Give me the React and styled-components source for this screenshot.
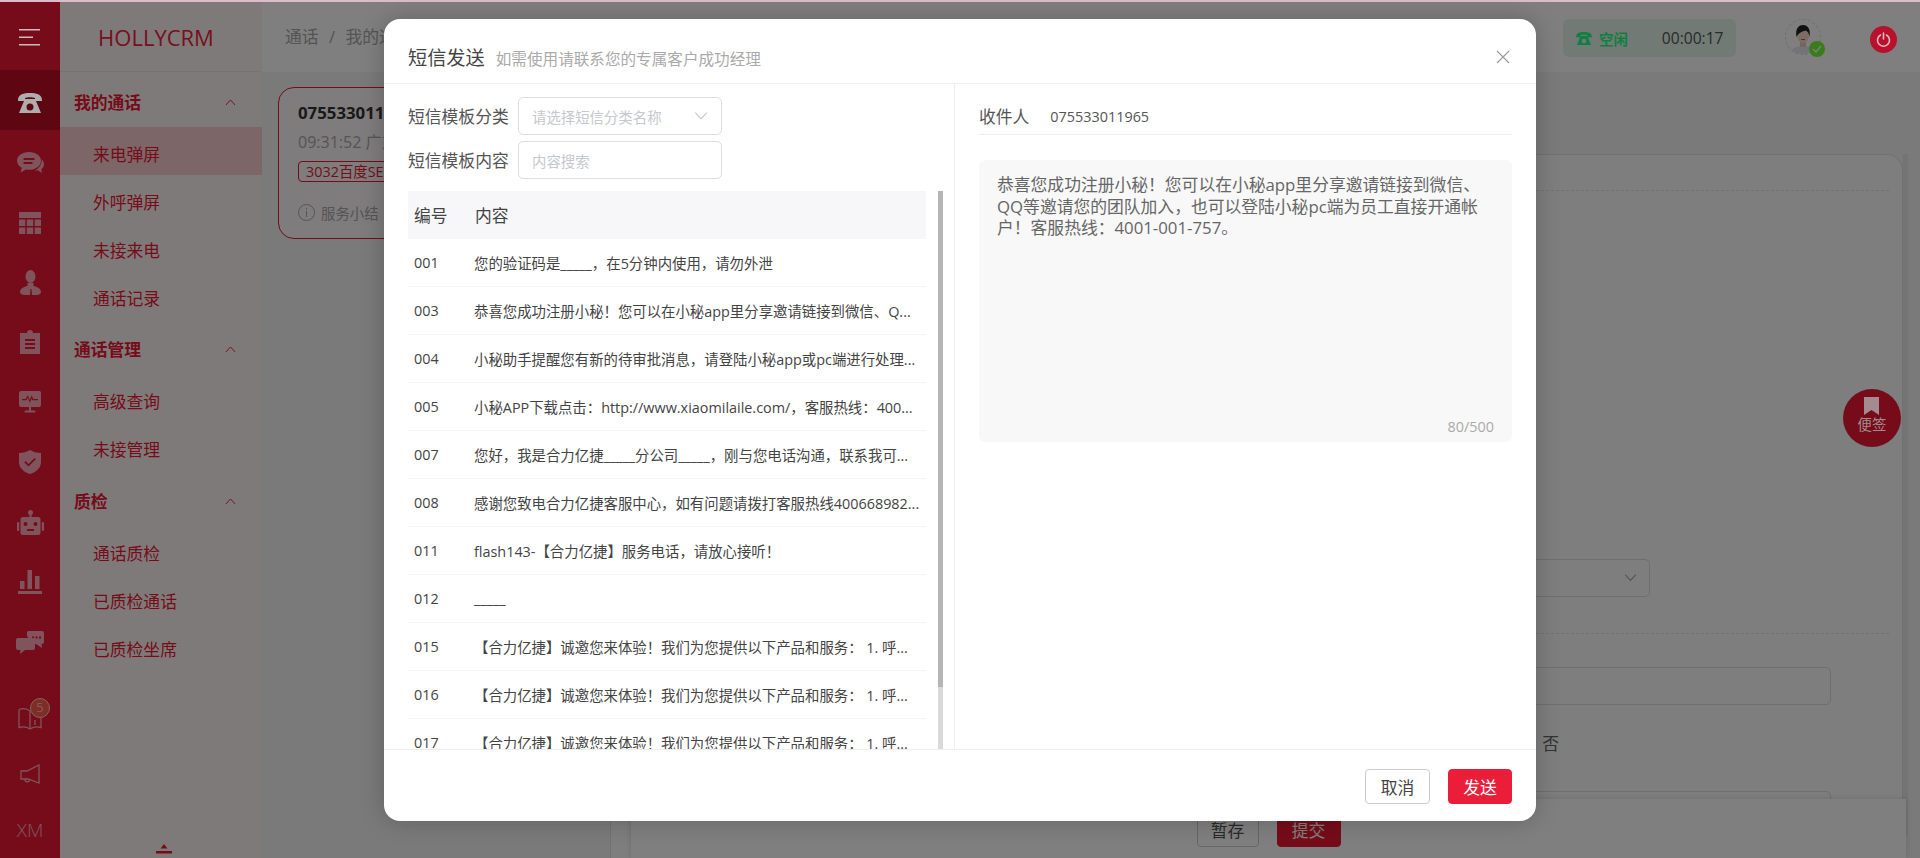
import styled, { createGlobalStyle } from "styled-components";

const GlobalStyle = createGlobalStyle`
	html, body {
		margin: 0;
		height: 100%;
		overflow: hidden;
		background: #dcbccc;
		font-family: "Open Sans", "Noto Sans CJK SC", sans-serif;
		color: #333;
	}
	* {
		box-sizing: border-box;
	}
`

const Page = styled.div`
	position: relative;
	display: flex;
	width: 1920px;
	height: 858px;
	padding-top: 2px;
	overflow: hidden;
`

const Sidebar = styled.nav`
	display: flex;
	flex-direction: column;
	flex: none;
	width: 60px;
	background: #ec1834;
	color: #ffa8b8;
`

const Burger = styled.div`
	position: relative;
	z-index: 11;
	display: flex;
	align-items: center;
	justify-content: center;
	height: 68px;
	color: #c8bcbe;
	padding-top: 4px;
`

const SideItem = styled.div`
	display: flex;
	align-items: center;
	justify-content: center;
	height: 60px;
	padding-top: 6px;
	background: ${p => p.$active ? "#bc0c24" : "transparent"};
`

const SideIcon = styled.span`
	display: flex;
	position: ${p => p.$active ? "relative" : "static"};
	z-index: ${p => p.$active ? 11 : "auto"};
	color: ${p => p.$active ? "#aeaeae" : "inherit"};
`

const SideBottom = styled.div`
	display: flex;
	flex-direction: column;
	margin-top: 21px;
`

const BottomItem = styled.div`
	position: relative;
	display: flex;
	align-items: center;
	justify-content: center;
	height: 56px;
	font-size: 19px;
	font-weight: 300;
`

const Badge = styled.span`
	position: absolute;
	top: 8px;
	left: 30px;
	width: 20px;
	height: 20px;
	border-radius: 50%;
	border: 1px solid #ffd0c0;
	background: #fc5c4c;
	color: #ffe6e0;
	font-size: 13px;
	line-height: 17px;
	text-align: center;
`

const MenuPanel = styled.aside`
	position: relative;
	flex: none;
	width: 202px;
	background: #fff5f5;
`

const Logo = styled.div`
	display: flex;
	align-items: center;
	justify-content: center;
	height: 70px;
	padding-right: 10px;
	border-bottom: 1px solid #f0e4e4;
	color: #f0203c;
	font-size: 22px;
`

const GroupTitle = styled.div`
	display: flex;
	align-items: center;
	justify-content: space-between;
	height: 55px;
	margin-top: ${p => p.$gap}px;
	padding: 5px 26px 0 14px;
	color: #ec1834;
	font-size: 16.8px;
	font-weight: 700;
`

const MenuLink = styled.div`
	display: flex;
	align-items: center;
	height: 48px;
	padding: 5px 0 0 33px;
	background: ${p => p.$active ? "#f8ccd0" : "transparent"};
	color: #ec1834;
	font-size: 16.8px;
`

const Collapse = styled.div`
	position: absolute;
	left: 96px;
	bottom: 11px;
	width: 16px;
	height: 10px;
	color: #ec1834;
`

const Main = styled.main`
	position: relative;
	display: flex;
	flex-direction: column;
	flex: 1;
	min-width: 0;
`

const Header = styled.header`
	display: flex;
	align-items: center;
	flex: none;
	height: 70px;
	padding-left: 23px;
	background: #fff;
`

const Breadcrumb = styled.div`
	flex: 1;
	padding-bottom: 3px;
	color: #a8a8a8;
	font-size: 16.8px;
	word-spacing: 6px;
`

const StatusPill = styled.div`
	display: flex;
	align-items: center;
	width: 173px;
	height: 38px;
	padding-left: 13px;
	margin-top: 2px;
	border-radius: 6px;
	background: #e2f4e8;
	color: #1eff84;
`

const StatusIcon = styled.span`
	display: flex;
`

const StatusText = styled.span`
	margin-left: 7px;
	font-size: 14.4px;
	font-weight: 700;
`

const Timer = styled.span`
	margin-left: 34px;
	color: #555;
	font-size: 15.6px;
`

const Avatar = styled.div`
	position: relative;
	width: 36px;
	height: 36px;
	margin-left: 49px;
	border-radius: 50%;
	border: 1px dashed #ddd;
`

const AvatarCheck = styled.span`
	position: absolute;
	right: -5px;
	bottom: -3px;
	display: flex;
	align-items: center;
	justify-content: center;
	width: 16px;
	height: 16px;
	border-radius: 50%;
	background: #74f838;
	color: #fff;
`

const PowerButton = styled.div`
	position: relative;
	z-index: 11;
	display: flex;
	align-items: center;
	justify-content: center;
	width: 27px;
	height: 27px;
	margin: 4px 23px 0 49px;
	border-radius: 50%;
	background: #b8112b;
	color: #e6b8c0;
`

const Content = styled.div`
	display: flex;
	flex: 1;
	min-height: 0;
	padding: 15px 12px 0 16px;
	background: #f4f4f4;
`

const CallCard = styled.section`
	flex: none;
	width: 320px;
	height: 152px;
	padding: 14px 19px;
	border: 1px solid #ec1834;
	border-radius: 16px;
	background: #fdf8f8;
`

const CallNumber = styled.div`
	font-size: 16.8px;
	font-weight: 700;
	line-height: 22px;
`

const CallTime = styled.div`
	margin-top: 7px;
	color: #aaa;
	font-size: 16px;
	line-height: 22px;
`

const CallTag = styled.span`
	display: inline-block;
	margin-top: 8px;
	padding: 0 7px;
	border: 1px solid #ec1834;
	border-radius: 4px;
	color: #ec1834;
	font-size: 14.4px;
	line-height: 19px;
`

const CallService = styled.div`
	display: flex;
	align-items: center;
	gap: 6px;
	margin-top: 20px;
	color: #aaa;
	font-size: 14.4px;
`

const FormPanel = styled.section`
	display: flex;
	flex-direction: column;
	flex: 1;
	margin: 67px 0 0 12px;
	border: 1px solid #e2e2e2;
	border-bottom: 0;
	border-radius: 16px 16px 0 0;
	background: #fcfcfc;
`

const DashRule = styled.div`
	flex: none;
	margin: ${p => p.$top}px 13px 0 0;
	border-top: 1px dashed #e4e4e4;
`

const FormField = styled.div`
	flex: none;
	align-self: flex-end;
	display: flex;
	align-items: center;
	justify-content: flex-end;
	width: 400px;
	height: 38px;
	margin: ${p => p.$top}px ${p => p.$right}px 0 0;
	padding-right: 12px;
	border: 1px solid #ddd;
	border-radius: 5px;
	color: #bbb;
`

const RadioLabel = styled.div`
	flex: none;
	align-self: flex-end;
	margin: 27px 343px 0 0;
	color: #666;
	font-size: 16.8px;
	line-height: 24px;
`

const PanelScroll = styled.div`
	flex: none;
	width: 5px;
	height: 682px;
	margin-top: 67px;
	background: #e8e8e8;
`

const BottomBar = styled.div`
	position: absolute;
	left: 369px;
	right: 14px;
	bottom: 0;
	display: flex;
	align-items: center;
	justify-content: center;
	gap: 18px;
	height: 59px;
	padding-top: 2px;
	background: #fff;
	box-shadow: 0 0 6px rgba(0, 0, 0, 0.15);
`

const BarButton = styled.div`
	display: flex;
	align-items: center;
	justify-content: center;
	width: ${p => p.$primary ? 64 : 62}px;
	height: 34px;
	border: 1px solid ${p => p.$primary ? "#ec1834" : "#ccc"};
	border-radius: 4px;
	background: ${p => p.$primary ? "#ec1834" : "transparent"};
	color: ${p => p.$primary ? "#fff" : "#555"};
	font-size: 16.8px;
`

const Fab = styled.div`
	position: absolute;
	left: 1843px;
	top: 389px;
	display: flex;
	flex-direction: column;
	align-items: center;
	width: 58px;
	height: 58px;
	padding-top: 8px;
	border-radius: 50%;
	background: #ec1834;
	font-size: 14.4px;
	line-height: 20px;
`

const FabContent = styled.span`
	position: relative;
	z-index: 11;
	display: flex;
	flex-direction: column;
	align-items: center;
	color: #a58a90;
`

const Overlay = styled.div`
	position: absolute;
	inset: 2px 0 0 0;
	z-index: 10;
	display: flex;
	justify-content: center;
	align-items: flex-start;
	padding-top: 17px;
	background: rgba(0, 0, 0, 0.5);
`

const Modal = styled.div`
	display: flex;
	flex-direction: column;
	width: 1152px;
	height: 802px;
	border-radius: 16px;
	background: #fff;
	box-shadow: 0 0 24px rgba(0, 0, 0, 0.22);
	overflow: hidden;
`

const ModalHeader = styled.div`
	display: flex;
	align-items: center;
	flex: none;
	height: 65px;
	padding: 22px 26px 10px 24px;
	border-bottom: 1px solid #eee;
`

const ModalTitle = styled.h2`
	margin: 0;
	color: #444;
	font-size: 19.2px;
	font-weight: 400;
`

const ModalHint = styled.span`
	flex: 1;
	margin-left: 11px;
	color: #aaa;
	font-size: 15.6px;
	padding-top: 2px;
`

const ModalBody = styled.div`
	display: flex;
	flex: 1;
	min-height: 0;
`

const LeftColumn = styled.div`
	display: flex;
	flex-direction: column;
	flex: none;
	width: 571px;
	padding: 13px 11px 0 24px;
	border-right: 1px solid #eee;
	overflow: hidden;
`

const FilterRow = styled.div`
	display: flex;
	align-items: center;
	flex: none;
	height: 38px;
	margin-bottom: ${p => p.$gap}px;
	color: #555;
	font-size: 16.8px;
`

const FilterLabel = styled.label`
	flex: none;
	width: 110px;
`

const FilterBox = styled.div`
	display: flex;
	align-items: center;
	justify-content: space-between;
	width: 204px;
	height: 38px;
	padding: 0 13px;
	border: 1px solid #ddd;
	border-radius: 5px;
	color: #c5c8ce;
	font-size: 14.4px;
`

const TableWrap = styled.div`
	display: flex;
	flex: 1;
	min-height: 0;
	margin-top: 12px;
`

const TemplateTable = styled.div`
	flex: none;
	width: 518px;
	overflow: hidden;
`

const TableHead = styled.div`
	display: grid;
	grid-template-columns: 61px 1fr;
	align-items: center;
	height: 48px;
	padding-left: 6px;
	background: #f7f7f9;
	color: #444;
	font-size: 16.8px;
`

const TableRow = styled.div`
	display: grid;
	grid-template-columns: 60px 1fr;
	align-items: center;
	height: 48px;
	padding-left: 6px;
	border-bottom: 1px solid #f5f5f5;
	color: #444;
	font-size: 14.4px;
	white-space: nowrap;
`

const ScrollTrack = styled.div`
	flex: none;
	width: 5px;
	margin-left: 12px;
	background: #d9d9d9;
`

const ScrollThumb = styled.div`
	height: 496px;
	background: #b5b5b5;
`

const RightColumn = styled.div`
	flex: 1;
	padding: 0 24px;
`

const Recipient = styled.div`
	display: flex;
	align-items: center;
	height: 51px;
	padding-top: 13px;
	border-bottom: 1px solid #eee;
	color: #555;
	font-size: 16.8px;
`

const RecipientNumber = styled.span`
	margin-left: 21px;
	font-size: 14.4px;
	padding-top: 2px;
`

const MessageBox = styled.div`
	display: flex;
	flex-direction: column;
	justify-content: space-between;
	height: 282px;
	margin-top: 25px;
	padding: 14px 18px 4px;
	border-radius: 6px;
	background: #f8f8f8;
	color: #666;
	font-size: 16.8px;
	line-height: 21.6px;
`

const Counter = styled.div`
	align-self: flex-end;
	color: #aaa;
	font-size: 14.4px;
`

const ModalFooter = styled.div`
	display: flex;
	justify-content: flex-end;
	gap: 18px;
	flex: none;
	height: 72px;
	padding: 19px 24px 0;
	border-top: 1px solid #eee;
`

const ModalButton = styled.button`
	width: ${p => p.$primary ? 64 : 65}px;
	height: 35px;
	padding: 0;
	border: 1px solid ${p => p.$primary ? "#eb1e3a" : "#ccc"};
	border-radius: 4px;
	background: ${p => p.$primary ? "#eb1e3a" : "#fff"};
	color: ${p => p.$primary ? "#fff" : "#444"};
	font-family: inherit;
	font-size: 16.8px;
`

const CloseIcon = () => (
	<svg width="14" height="14" viewBox="0 0 14 14" fill="none" stroke="#999" strokeWidth="1.1">
		<path d="M1 1l12 12M13 1L1 13" />
	</svg>
)

const PhoneIcon = ({ w = 24, h = 20 }) => (
	<svg width={w} height={h} viewBox="0 0 24 20" fill="currentColor">
		<path d="M0 7C0 1 6 0 12 0s12 1 12 7v1h-7V5c-2-1-8-1-10 0v3H0z" />
		<path fillRule="evenodd" d="M7 6h10l1 2 5 12H1L6 8zM12 10.500a3.500 3.500 0 1 0 0 7a3.500 3.500 0 0 0 0-7z" />
	</svg>
)

const ChatIcon = () => (
	<svg width="27" height="21" viewBox="0 0 27 21" fill="currentColor">
		<path fillRule="evenodd" d="M12 0C5.400 0 0 3.800 0 8.700c0 2.900 1.900 5.400 4.800 7L3.600 20.500l5.400-3c1 .2 2 .3 3 .3 6.600 0 12-3.900 12-9.100S18.600 0 12 0zM6.500 6h11v2h-11zM6.500 10h9v2h-9z" />
		<path d="M24.800 7.500c1.400 1.300 2.200 3 2.200 4.800 0 2-1 3.800-2.700 5l.7 3.700-4.200-2.700c-1 .2-2 .2-3 .1 3.700-1.300 6.800-5.500 7-10.900z" />
	</svg>
)

const GridIcon = () => (
	<svg width="22" height="22" viewBox="0 0 22 22" fill="currentColor">
		<rect width="22" height="6" />
		<rect y="7.500" width="6.300" height="6.500" />
		<rect x="7.800" y="7.500" width="6.400" height="6.500" />
		<rect x="15.700" y="7.500" width="6.300" height="6.500" />
		<rect y="15.500" width="6.300" height="6.500" />
		<rect x="7.800" y="15.500" width="6.400" height="6.500" />
		<rect x="15.700" y="15.500" width="6.300" height="6.500" />
	</svg>
)

const PersonIcon = () => (
	<svg width="21" height="25" viewBox="0 0 21 25" fill="currentColor">
		<ellipse cx="10.500" cy="6.500" rx="5" ry="6.500" />
		<path d="M7.500 13h6v3l2 .5c3.500 1 5.500 3 5.500 5.500 0 2-2 3-5 3h-4l-.5-6h-1L10 25H5c-3 0-5-1-5-3 0-2.500 2-4.500 5.500-5.500l2-.5z" />
	</svg>
)

const ClipboardIcon = () => (
	<svg width="20" height="24" viewBox="0 0 20 24" fill="currentColor">
		<path fillRule="evenodd" d="M7 3c0-4 6-4 6 0h7v21H0V3zM5 9v2h10V9zM5 13v2h10v-2zM5 17v2h10v-2z" />
	</svg>
)

const MonitorIcon = () => (
	<svg width="22" height="22" viewBox="0 0 22 22" fill="currentColor">
		<path fillRule="evenodd" d="M2 0h18a2 2 0 0 1 2 2v12a2 2 0 0 1-2 2H2a2 2 0 0 1-2-2V2a2 2 0 0 1 2-2zM3 8v1.300h4.400l1.400-2.600 2 5 1.900-4.200.7 1.800H19V8h-4.700l-1.600-3.600-2 4.500-1.800-4.700L6.700 8z" />
		<rect x="10" y="16" width="2" height="4" />
		<rect x="5.500" y="19.500" width="11" height="2" rx="1" />
	</svg>
)

const ShieldIcon = () => (
	<svg width="22" height="24" viewBox="0 0 22 24" fill="currentColor">
		<path fillRule="evenodd" d="M11 0c3 2 7 3 11 3v9c0 6-5 10-11 12C5 22 0 18 0 12V3c4 0 8-1 11-3zM6.500 11l-1.300 1.300 4.300 4.200 7.300-7.200L15.500 8l-6 6z" />
	</svg>
)

const RobotIcon = () => (
	<svg width="27" height="25" viewBox="0 0 27 25" fill="currentColor">
		<circle cx="13.500" cy="2.500" r="2.500" />
		<rect x="12.500" y="4" width="2" height="4" />
		<path fillRule="evenodd" d="M6 7h15a2.500 2.500 0 0 1 2.500 2.500v13A2.500 2.500 0 0 1 21 25H6a2.500 2.500 0 0 1-2.500-2.500v-13A2.500 2.500 0 0 1 6 7zM8.500 12a2 2 0 1 0 0 4 2 2 0 0 0 0-4zM18.500 12a2 2 0 1 0 0 4 2 2 0 0 0 0-4zM10 19v2h7v-2z" />
		<rect y="12" width="2.200" height="9" rx="1.100" />
		<rect x="24.800" y="12" width="2.200" height="9" rx="1.100" />
	</svg>
)

const ChartIcon = () => (
	<svg width="24" height="24" viewBox="0 0 24 24" fill="currentColor">
		<rect x="2" y="11" width="4.500" height="8" />
		<rect x="9.500" y="0" width="4.500" height="19" />
		<rect x="17" y="6" width="4.500" height="13" />
		<rect y="21" width="24" height="3" />
	</svg>
)

const TalkIcon = () => (
	<svg width="28" height="23" viewBox="0 0 28 23" fill="currentColor">
		<path d="M2 7h15a2 2 0 0 1 2 2v8a2 2 0 0 1-2 2H9l-5 4 .5-4H2a2 2 0 0 1-2-2V9a2 2 0 0 1 2-2z" />
		<path fillRule="evenodd" d="M14 0h12a2 2 0 0 1 2 2v9a2 2 0 0 1-2 2h-.5l.5 4-6-4h-8V7c0-1-.5-1.500-1-1.700V2a2 2 0 0 1 3-2zM16 5.500v2h2v-2zM19.500 5.500v2h2v-2zM23 5.500v2h2v-2z" />
	</svg>
)

const BookIcon = () => (
	<svg width="24" height="24" viewBox="0 0 24 24" fill="none" stroke="currentColor" strokeWidth="1.300">
		<path d="M1 3.500c4-1.500 8-1 11 1.500M1 3.500V21.500c4-1 8-.5 11 1.500 3-2 7-2.500 11-1.500V12M12 5v18M17 14v5" />
	</svg>
)

const MegaphoneIcon = () => (
	<svg width="20" height="20" viewBox="0 0 20 20" fill="none" stroke="currentColor" strokeWidth="1.300">
		<path d="M19 1v18L8 15H1V7h6zM5 15.500c0 3 4 3 4.500.5" />
	</svg>
)

const Chevron = ({ up, size = 11, color = "currentColor" }) => (
	<svg width={size} height={size / 2 + 1} viewBox="0 0 12 7" fill="none" stroke={color} strokeWidth="1">
		<path d={up ? "M1 6.500L6 1l5 5.500" : "M1 .5L6 6l5-5.500"} />
	</svg>
)

const AvatarPhoto = () => (
	<svg width="34" height="34" viewBox="0 0 34 34">
		<clipPath id="avatarClip"><circle cx="17" cy="17" r="17" /></clipPath>
		<g clipPath="url(#avatarClip)">
			<path d="M4 34c1-6 7-8 13-8s12 2 13 8z" fill="#e8e8ee" />
			<rect x="14" y="21" width="6" height="6" fill="#eec8b8" />
			<ellipse cx="17" cy="15" rx="6" ry="8" fill="#f6d8cc" />
			<path d="M10.500 17C9 8 13 5 17 5s8 3 6.500 12c-.5-4-2-6-4-6.500-3 1-7 2-9 6.500z" fill="#222" />
			<path d="M15 19.500h4" stroke="#d84a4a" strokeWidth="1.200" />
		</g>
	</svg>
)

const menu = [
	{ title: "我的通话", gap: 0, items: ["来电弹屏", "外呼弹屏", "未接来电", "通话记录"] },
	{ title: "通话管理", gap: 0, items: ["高级查询", "未接管理"] },
	{ title: "质检", gap: 1, items: ["通话质检", "已质检通话", "已质检坐席"] },
];

const sideIcons = [PhoneIcon, ChatIcon, GridIcon, PersonIcon, ClipboardIcon, MonitorIcon, ShieldIcon, RobotIcon, ChartIcon, TalkIcon];

const invite = "【合力亿捷】诚邀您来体验！我们为您提供以下产品和服务： 1. 呼...";

const templates = [
	["001", "您的验证码是_____，在5分钟内使用，请勿外泄"],
	["003", "恭喜您成功注册小秘！您可以在小秘app里分享邀请链接到微信、Q..."],
	["004", "小秘助手提醒您有新的待审批消息，请登陆小秘app或pc端进行处理..."],
	["005", "小秘APP下载点击：http://www.xiaomilaile.com/，客服热线：400..."],
	["007", "您好，我是合力亿捷_____分公司_____，刚与您电话沟通，联系我可..."],
	["008", "感谢您致电合力亿捷客服中心，如有问题请拨打客服热线400668982..."],
	["011", "flash143-【合力亿捷】服务电话，请放心接听！"],
	["012", "_____"],
	["015", invite],
	["016", invite],
	["017", invite],
];

const App = () => {
	return (
		<Page>
			<GlobalStyle />
			<Sidebar>
				<Burger>
					<svg width="22" height="17" viewBox="0 0 22 17" fill="currentColor">
						<rect width="21" height="1.500" />
						<rect y="7.500" width="14" height="1.500" />
						<rect y="15" width="21" height="1.500" />
					</svg>
				</Burger>
				{sideIcons.map((Icon, i) => (
					<SideItem key={i} $active={i === 0}>
						<SideIcon $active={i === 0}><Icon /></SideIcon>
					</SideItem>
				))}
				<SideBottom>
					<BottomItem><BookIcon /><Badge>5</Badge></BottomItem>
					<BottomItem><MegaphoneIcon /></BottomItem>
					<BottomItem>XM</BottomItem>
				</SideBottom>
			</Sidebar>

			<MenuPanel>
				<Logo>HOLLYCRM</Logo>
				{menu.map(group => (
					<div key={group.title}>
						<GroupTitle $gap={group.gap}>{group.title}<Chevron up /></GroupTitle>
						{group.items.map(item => (
							<MenuLink key={item} $active={item === "来电弹屏"}>{item}</MenuLink>
						))}
					</div>
				))}
				<Collapse>
					<svg width="16" height="10" viewBox="0 0 16 10" fill="currentColor">
						<path d="M8 0l3.500 4.500h-7z" />
						<rect y="7" width="16" height="2.500" />
					</svg>
				</Collapse>
			</MenuPanel>

			<Main>
				<Header>
					<Breadcrumb>通话 / 我的通话 / 来电弹屏</Breadcrumb>
					<StatusPill>
						<StatusIcon><PhoneIcon w={16} h={13} /></StatusIcon>
						<StatusText>空闲</StatusText>
						<Timer>00:00:17</Timer>
					</StatusPill>
					<Avatar>
						<AvatarPhoto />
						<AvatarCheck>
							<svg width="10" height="8" viewBox="0 0 10 8" fill="none" stroke="currentColor" strokeWidth="1.200">
								<path d="M1 4l3 3 5-6" />
							</svg>
						</AvatarCheck>
					</Avatar>
					<PowerButton>
						<svg width="15" height="15" viewBox="0 0 15 15" fill="none" stroke="currentColor" strokeWidth="1.600" strokeLinecap="round">
							<path d="M4.500 3a6 6 0 1 0 6 0M7.500 1v6" />
						</svg>
					</PowerButton>
				</Header>
				<Content>
					<CallCard>
						<CallNumber>075533011965</CallNumber>
						<CallTime>09:31:52 广东深圳</CallTime>
						<CallTag>3032百度SEM</CallTag>
						<CallService>
							<svg width="17" height="17" viewBox="0 0 17 17" fill="none" stroke="currentColor">
								<circle cx="8.500" cy="8.500" r="8" />
								<path d="M8.500 7v6M8.500 4v1.500" />
							</svg>
							服务小结
						</CallService>
					</CallCard>
					<FormPanel>
						<DashRule $top={35} />
						<FormField $top={368} $right={252}>
							<Chevron size={13} color="#aaa" />
						</FormField>
						<DashRule $top={36} />
						<FormField $top={33} $right={71} />
						<RadioLabel>否</RadioLabel>
						<FormField $top={35} $right={71} />
					</FormPanel>
					<PanelScroll />
				</Content>
				<BottomBar>
					<BarButton>暂存</BarButton>
					<BarButton $primary>提交</BarButton>
				</BottomBar>
			</Main>

			<Fab>
				<FabContent>
					<svg width="15" height="18" viewBox="0 0 15 18" fill="currentColor">
						<path d="M0 0h15v18l-7.500-5L0 18z" />
					</svg>
					便签
				</FabContent>
			</Fab>

			<Overlay>
				<Modal>
					<ModalHeader>
						<ModalTitle>短信发送</ModalTitle>
						<ModalHint>如需使用请联系您的专属客户成功经理</ModalHint>
						<CloseIcon />
					</ModalHeader>
					<ModalBody>
						<LeftColumn>
							<FilterRow $gap={6}>
								<FilterLabel>短信模板分类</FilterLabel>
								<FilterBox>
									请选择短信分类名称
									<Chevron size={14} color="#c5c8ce" />
								</FilterBox>
							</FilterRow>
							<FilterRow $gap={0}>
								<FilterLabel>短信模板内容</FilterLabel>
								<FilterBox>内容搜索</FilterBox>
							</FilterRow>
							<TableWrap>
								<TemplateTable>
									<TableHead>
										<span>编号</span>
										<span>内容</span>
									</TableHead>
									{templates.map(([code, text]) => (
										<TableRow key={code}>
											<span>{code}</span>
											<span>{text}</span>
										</TableRow>
									))}
								</TemplateTable>
								<ScrollTrack><ScrollThumb /></ScrollTrack>
							</TableWrap>
						</LeftColumn>
						<RightColumn>
							<Recipient>
								收件人
								<RecipientNumber>075533011965</RecipientNumber>
							</Recipient>
							<MessageBox>
								<div>恭喜您成功注册小秘！您可以在小秘app里分享邀请链接到微信、QQ等邀请您的团队加入，也可以登陆小秘pc端为员工直接开通帐户！客服热线：4001-001-757。</div>
								<Counter>80/500</Counter>
							</MessageBox>
						</RightColumn>
					</ModalBody>
					<ModalFooter>
						<ModalButton>取消</ModalButton>
						<ModalButton $primary>发送</ModalButton>
					</ModalFooter>
				</Modal>
			</Overlay>
		</Page>
	);
}

export default App;
